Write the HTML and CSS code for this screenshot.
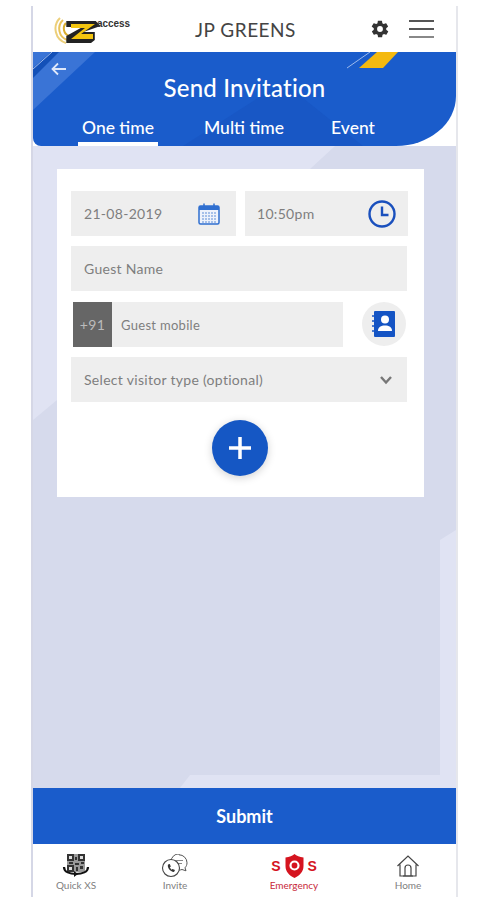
FILE: index.html
```html
<!DOCTYPE html>
<html>
  <head>
    <meta charset="utf-8">
    <title>Send Invitation</title>
    <link rel="stylesheet" href="styles.css">
  </head>
  <body>
    <div class="phone">
      <div class="topbar">
        <div class="logo">
          <svg width="50" height="30" viewBox="0 0 50 30">
            <path d="M10 5 A12 12 0 0 0 14 25" fill="none" stroke="#e9c35a" stroke-width="2"/>
            <path d="M7 3 A15 15 0 0 0 13 28" fill="none" stroke="#eccf7a" stroke-width="2"/>
            <path d="M13 8 A8 8 0 0 0 16 21" fill="none" stroke="#d9ad30" stroke-width="2"/>
            <path d="M14 9 H45 L50 14 L32 20 H44 V28 L40 31 H14 V24 L31 15 H14 Z" transform="translate(0 -3) scale(.95 1)" fill="#222"/>
            <path d="M18 9 H42 L28 19 H40 V24 H18 L32 13 H18 Z" fill="#f2c40f"/>
          </svg>
          <span class="logo-text">access</span>
        </div>
        <div class="site-name">JP GREENS</div>
        <svg class="gear" width="20" height="20" viewBox="0 0 24 24">
          <path fill="#333" fill-rule="evenodd" d="M19.4 13c.1-.3.1-.7.1-1s0-.7-.1-1l2.1-1.6c.2-.2.2-.4.1-.6l-2-3.5c-.1-.2-.4-.3-.6-.2l-2.5 1c-.5-.4-1.100-.7-1.700-1l-.4-2.600c0-.3-.2-.5-.5-.5h-4c-.3 0-.5.2-.5.5l-.4 2.600c-.6.3-1.200.6-1.700 1l-2.500-1c-.2-.1-.5 0-.6.200l-2 3.500c-.1.200-.1.400.1.600L4.600 11c-.1.300-.1.700-.1 1s0 .700.1 1l-2.100 1.600c-.2.200-.2.400-.1.600l2 3.500c.1.200.4.300.6.200l2.500-1c.5.400 1.100.700 1.700 1l.4 2.600c0 .3.2.5.5.5h4c.3 0 .5-.2.5-.5l.4-2.600c.6-.3 1.200-.6 1.700-1l2.500 1c.2.100.5 0 .6-.2l2-3.500c.1-.2.100-.4-.1-.6L19.400 13zM12 15.500a3.500 3.500 0 1 1 0-7 3.500 3.500 0 0 1 0 7z"/>
        </svg>
        <div class="burger"><i></i><i></i><i></i></div>
      </div>

      <div class="hero">
        <svg class="hero-art" width="423" height="94" viewBox="0 0 423 94">
          <polygon points="0,0 62,0 0,58" fill="#3a74d6"/>
          <polygon points="150,94 250,30 330,94" fill="#1857c5"/>
          <polygon points="0,16 18,0 26,0 0,26" fill="#1350b8"/>
          <line x1="0" y1="17" x2="19" y2="0" stroke="#9db9ec" stroke-width="1"/>
          <line x1="314" y1="16" x2="337" y2="0" stroke="#9db9ec" stroke-width="1"/>
          <polygon points="344,0 365,0 350,16 326,16" fill="#f4b90f"/>
        </svg>
        <svg class="back" width="18" height="16" viewBox="0 0 18 16">
          <path d="M16 8H3M8 2.500 2.500 8 8 13.500" fill="none" stroke="#dfe8fa" stroke-width="1.800"/>
        </svg>
        <h1 class="hero-title">Send Invitation</h1>
        <div class="tabs">
          <div class="tab tab-on">One time</div>
          <div class="tab">Multi time</div>
          <div class="tab">Event</div>
        </div>
      </div>

      <div class="content">
        <svg class="bg-art" width="423" height="642" viewBox="0 0 423 642">
          <polygon points="0,274 24,254 277,23 302,0 423,0 423,384 407,394 407,629 157,629 147,642 0,642" fill="#d6daec"/>
        </svg>
        <div class="card">
          <div class="row">
            <div class="field field-date">
              <span>21-08-2019</span>
              <svg width="24" height="24" viewBox="0 0 24 24">
                <rect x="2" y="4" width="20" height="18" rx="1.500" fill="#eef2fb" stroke="#2f6fd0" stroke-width="1.500"/>
                <rect x="2" y="4" width="20" height="4" fill="#2f6fd0"/>
                <path d="M7 1.500v4M17 1.500v4" stroke="#2f6fd0" stroke-width="1.500"/>
                <path d="M5 11h14M5 14h14M5 17h14M5 20h14" stroke="#8fb0e4" stroke-width="1.300" stroke-dasharray="2 1"/>
              </svg>
            </div>
            <div class="field field-time">
              <span>10:50pm</span>
              <svg width="28" height="28" viewBox="0 0 28 28">
                <circle cx="14" cy="14" r="12.500" fill="none" stroke="#1a50bd" stroke-width="2.400"/>
                <path d="M14 6.500V15h6.500" fill="none" stroke="#1a50bd" stroke-width="2.400"/>
              </svg>
            </div>
          </div>
          <div class="field">
            <span>Guest Name</span>
          </div>
          <div class="row row-mobile">
            <div class="field field-mobile">
              <div class="prefix">+91</div>
              <span>Guest mobile</span>
            </div>
            <div class="contact">
              <svg width="24" height="28" viewBox="0 0 24 28">
                <rect x="2" y="1" width="21" height="26" rx="1" fill="#1454c4"/>
                <path d="M0 6h4M0 11h4M0 16h4M0 21h4" stroke="#1454c4" stroke-width="1.500"/>
                <circle cx="13" cy="9.500" r="4" fill="#fff"/>
                <path d="M6 21c0-4 3-5.500 7-5.500s7 1.500 7 5.500z" fill="#fff"/>
              </svg>
            </div>
          </div>
          <div class="field field-select">
            <span>Select visitor type (optional)</span>
            <svg width="14" height="10" viewBox="0 0 14 10">
              <path d="M2 2 7 7.500 12 2" fill="none" stroke="#777" stroke-width="2.400"/>
            </svg>
          </div>
          <div class="add">
            <svg width="26" height="26" viewBox="0 0 26 26">
              <path d="M13 2v22M2 13h22" stroke="#fff" stroke-width="3.500"/>
            </svg>
          </div>
        </div>
      </div>

      <div class="submit">Submit</div>

      <div class="bottom-nav">
        <div class="nav-item nav-qr">
          <svg width="28" height="24" viewBox="0 0 28 24">
            <rect x="5" y="0" width="18" height="18" fill="#9a9a9a"/>
            <g fill="#333">
              <rect x="5" y="0" width="7" height="7"/>
              <rect x="16" y="0" width="7" height="7"/>
              <rect x="5" y="11" width="7" height="7"/>
              <rect x="18" y="12" width="3" height="3"/>
              <rect x="13" y="3" width="2" height="3"/>
              <rect x="13" y="9" width="4" height="2"/>
              <rect x="14" y="13" width="2" height="4"/>
              <rect x="7" y="8" width="4" height="2"/>
              <rect x="19" y="8" width="3" height="2"/>
            </g>
            <g fill="#ddd">
              <rect x="7" y="2" width="3" height="3"/>
              <rect x="18" y="2" width="3" height="3"/>
              <rect x="7" y="13" width="3" height="3"/>
            </g>
            <path d="M2 13c0 5 6 7 12 7s12-2 12-7" fill="none" stroke="#111" stroke-width="2.200"/>
            <path d="M12 17l4 3-4 3z" fill="#111"/>
          </svg>
          <span>Quick XS</span>
        </div>
        <div class="nav-item nav-invite">
          <svg width="28" height="24" viewBox="0 0 28 24">
            <path d="M18 .8a8 8 0 0 1 8 8c0 2-.7 3.500-2 5l1 3-4-1.300a8 8 0 0 1-3 .5 8 8 0 0 1 0-16.200z" fill="#fff" stroke="#555" stroke-width="1"/>
            <path d="M14 6.500h8M14 9.500h7" stroke="#888" stroke-width="1"/>
            <circle cx="10" cy="14" r="8.500" fill="#fff" stroke="#444" stroke-width="1.100"/>
            <path d="M7 10.500c-1 3 2 7 6 7.500l1-2-2.500-1-1 .8-1.700-2.300 1-1-1-2.500z" fill="#333"/>
          </svg>
          <span>Invite</span>
        </div>
        <div class="nav-item nav-sos">
          <div class="sos-icon">
            <b>S</b>
            <svg width="21" height="24" viewBox="0 0 20 24">
              <path d="M10 0c2 2 5 3 9 3.500V12c0 6-4 9.500-9 12-5-2.500-9-6-9-12V3.500C5 3 8 2 10 0z" fill="#d5141f"/>
              <circle cx="10" cy="11.500" r="4" fill="none" stroke="#fff" stroke-width="2.200"/>
            </svg>
            <b>S</b>
          </div>
          <span>Emergency</span>
        </div>
        <div class="nav-item nav-home">
          <svg width="24" height="24" viewBox="0 0 24 24">
            <path d="M1.500 12 12 2l10.500 10M4 10.500V22h16V10.500" fill="none" stroke="#444" stroke-width="1.200"/>
            <path d="M9 22v-8a3 3 0 0 1 6 0v8M7 22h10" fill="none" stroke="#444" stroke-width="1.200"/>
          </svg>
          <span>Home</span>
        </div>
      </div>
    </div>
  </body>
</html>
```

FILE: styles.css
```css
body {
  margin: 0;
  background: #fff;
  font-family: "Lato", "Open Sans", sans-serif;
}

.phone {
  box-sizing: border-box;
  width: 427px;
  height: 891px;
  margin: 6px 0 0 31px;
  border-left: 2px solid #d5d7e6;
  border-right: 2px solid #e6e7ec;
  display: flex;
  flex-direction: column;
}

/* top bar */
.topbar {
  height: 46px;
  flex: none;
  display: flex;
  align-items: center;
  position: relative;
  background: #fff;
}
.logo {
  display: flex;
  align-items: flex-start;
  margin-left: 20px;
  width: 90px;
  margin-top: 2px;
}
.logo-text {
  font: bold 10.500px "Liberation Sans", sans-serif;
  color: #333;
  margin: 2px 0 0 -7px;
  transform: scaleX(0.95);
}
.site-name {
  margin-left: 35px;
  width: 135px;
  text-align: center;
  font-size: 19px;
  letter-spacing: 0.5px;
  color: #444;
}
.gear {
  margin-left: 57px;
}
.burger {
  margin-left: 19px;
  width: 25px;
  display: flex;
  flex-direction: column;
  gap: 6px;
}
.burger i {
  display: block;
  height: 2px;
  background: #555;
}
.burger i:last-child {
  background: #888;
}

/* blue header */
.hero {
  height: 94px;
  flex: none;
  position: relative;
  z-index: 1;
  background: #1a5ccb;
  border-radius: 0 0 60px 8px / 0 0 50px 8px;
  overflow: hidden;
  color: #fff;
  text-align: center;
}
.hero-art {
  position: absolute;
  left: 0;
  top: 0;
}
.back {
  position: absolute;
  left: 17px;
  top: 9px;
}
.hero-title {
  position: relative;
  margin: 20px 0 0;
  font-size: 24px;
  line-height: 32px;
  font-weight: 500;
  letter-spacing: 0.2px;
}
.tabs {
  position: relative;
  display: flex;
  margin-top: 9px;
  font-size: 17.500px;
  font-weight: 500;
}
.tab {
  height: 33px;
  line-height: 30px;
  box-sizing: border-box;
}
.tab:nth-child(1) {
  width: 80px;
  margin-left: 45px;
}
.tab:nth-child(2) {
  width: 100px;
  margin-left: 36px;
}
.tab:nth-child(3) {
  width: 60px;
  margin-left: 29px;
}
.tab-on {
  border-bottom: 4px solid #fff;
}

/* form area */
.content {
  flex: 1;
  position: relative;
  background: #e0e3f3;
  padding: 23px 32px 0 24px;
}
.bg-art {
  position: absolute;
  left: 0;
  top: 0;
}
.card {
  position: relative;
  height: 328px;
  box-sizing: border-box;
  background: #fff;
  padding: 22px 17px 0 14px;
  display: flex;
  flex-direction: column;
  gap: 10px;
}
.row {
  display: flex;
  gap: 9px;
}
.row-mobile {
  margin-top: 1px;
}
.field {
  height: 45px;
  box-sizing: border-box;
  background: #eeeeee;
  padding: 0 13px;
  display: flex;
  align-items: center;
  justify-content: space-between;
  font-size: 14px;
  letter-spacing: 0.3px;
  color: #7e7e7e;
}
.field-date {
  width: 165px;
  padding-right: 15px;
}
.field-time {
  width: 163px;
  padding: 0 12px 0 12px;
  margin-right: -1px;
}
.field-mobile {
  width: 270px;
  margin-left: 2px;
  padding: 0;
  justify-content: flex-start;
  font-size: 13px;
}
.prefix {
  width: 39px;
  height: 100%;
  margin-right: 9px;
  background: #666;
  color: #bbb;
  font-size: 14px;
  display: flex;
  align-items: center;
  justify-content: center;
}
.contact {
  width: 44px;
  height: 44px;
  margin-left: 10px;
  border-radius: 50%;
  background: #eeeeee;
  display: flex;
  align-items: center;
  justify-content: center;
}
.field-select {
  padding-right: 14px;
}
.add {
  width: 56px;
  height: 56px;
  margin: 8px 0 0 141px;
  border-radius: 50%;
  background: #1557c4;
  box-shadow: 0 2px 8px rgba(0, 0, 0, 0.18);
  display: flex;
  align-items: center;
  justify-content: center;
}

/* submit + nav */
.submit {
  height: 56px;
  flex: none;
  background: #1a5ccb;
  color: #fff;
  font-size: 18px;
  font-weight: 700;
  display: flex;
  align-items: center;
  justify-content: center;
}
.bottom-nav {
  height: 53px;
  flex: none;
  background: #fff;
  display: flex;
}
.nav-item {
  display: flex;
  flex-direction: column;
  align-items: center;
  padding-top: 10px;
  font-size: 10px;
  color: #808080;
  gap: 1px;
}
.nav-qr {
  width: 60px;
  margin-left: 13px;
}
.nav-invite {
  width: 50px;
  margin-left: 44px;
}
.nav-sos {
  width: 70px;
  margin-left: 59px;
  color: #c8283a;
}
.nav-home {
  width: 40px;
  margin-left: 59px;
}
.sos-icon {
  display: flex;
  align-items: center;
  gap: 3px;
  height: 24px;
  color: #d5141f;
  font: bold 14px "Liberation Sans", sans-serif;
}
```
